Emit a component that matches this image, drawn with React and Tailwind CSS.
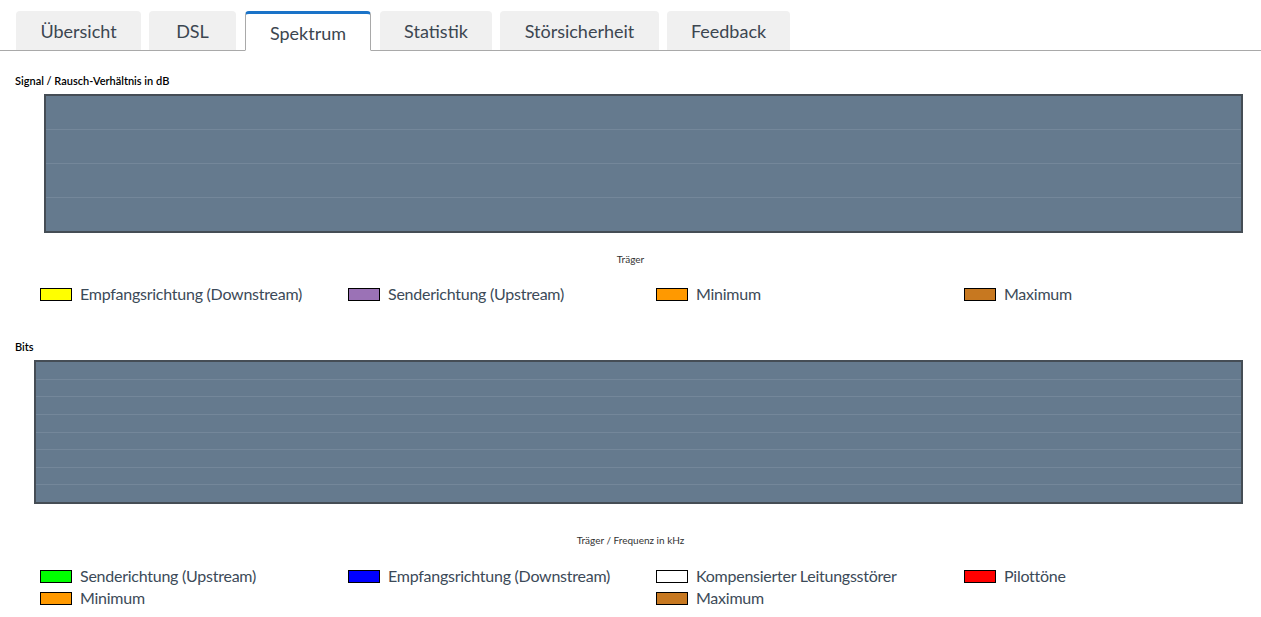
import React from 'react';

const tabs = [
  { label: 'Übersicht', w: 'w-[125px]' },
  { label: 'DSL', w: 'w-[87px]' },
  { label: 'Spektrum', w: 'w-[126px]', active: true },
  { label: 'Statistik', w: 'w-[112px]' },
  { label: 'Störsicherheit', w: 'w-[159px]' },
  { label: 'Feedback', w: 'w-[123px]' },
];

const font = { fontFamily: 'Lato, "Noto Sans", sans-serif' };

const Tabs = () => (
  <div className="flex items-end gap-2 pl-4 pt-[11px] border-b border-[#a9a9a9] h-[51px]">
    {tabs.map((t) =>
      t.active ? (
        <div
          key={t.label}
          className={`${t.w} h-[40px] -mb-px mx-px flex items-center justify-center pt-[2px] bg-white border border-[#a9a9a9] border-b-white border-t-[3px] border-t-[#1a73c8] rounded-t text-[18px] text-[#3c4650]`}
        >
          {t.label}
        </div>
      ) : (
        <div
          key={t.label}
          className={`${t.w} h-[39px] flex items-center justify-center pt-[2px] bg-[#f0f0f0] rounded-t text-[18px] text-[#3c4650]`}
        >
          {t.label}
        </div>
      )
    )}
  </div>
);

const Chart = ({ rows, height, left }) => (
  <div className={`${left} mr-[18px] ${height} border-2 border-[#454d55] bg-[#657a8e] flex flex-col`}>
    {Array.from({ length: rows }).map((_, i) => (
      <div key={i} className={`flex-1 ${i < rows - 1 ? 'border-b border-[#74879a]' : ''}`} />
    ))}
  </div>
);

const Swatch = ({ color }) => (
  <span className={`inline-block w-[32px] h-[13px] border border-black ${color}`} />
);

const LegendItem = ({ color, label, className = '' }) => (
  <div className={`flex items-center gap-[8px] h-[22px] ${className}`}>
    <Swatch color={color} />
    <span className="text-[16px] tracking-[-0.25px] text-[#3c4a58]">{label}</span>
  </div>
);

export default function App() {
  return (
    <div className="bg-white w-[1261px] h-[617px] overflow-hidden" style={font}>
      <Tabs />

      <div className="pl-[15px] mt-[24px] text-[11px] font-semibold text-black leading-[12px]">
        Signal / Rausch-Verhältnis in dB
      </div>
      <div className="mt-[7px]">
        <Chart rows={4} height="h-[139px]" left="ml-[44px]" />
      </div>
      <div className="mt-[20px] text-center text-[10px] text-[#333] leading-[12px]">Träger</div>
      <div className="mt-[18px] grid grid-cols-[308px_308px_308px_308px] pl-[40px]">
        <LegendItem color="bg-[#ffff00]" label="Empfangsrichtung (Downstream)" />
        <LegendItem color="bg-[#9b72b6]" label="Senderichtung (Upstream)" />
        <LegendItem color="bg-[#ff9900]" label="Minimum" />
        <LegendItem color="bg-[#c77820]" label="Maximum" />
      </div>

      <div className="pl-[15px] mt-[36px] text-[11px] font-semibold text-black leading-[12px]">Bits</div>
      <div className="mt-[7px]">
        <Chart rows={8} height="h-[144px]" left="ml-[34px]" />
      </div>
      <div className="mt-[30px] text-center text-[10px] text-[#333] leading-[12px]">
        Träger / Frequenz in kHz
      </div>
      <div className="mt-[19px] grid grid-cols-[308px_308px_308px_308px] pl-[40px]">
        <LegendItem color="bg-[#00ff00]" label="Senderichtung (Upstream)" />
        <LegendItem color="bg-[#0000ff]" label="Empfangsrichtung (Downstream)" />
        <LegendItem color="bg-white" label="Kompensierter Leitungsstörer" />
        <LegendItem color="bg-[#ff0000]" label="Pilottöne" />
        <LegendItem color="bg-[#ff9900]" label="Minimum" />
        <LegendItem color="bg-[#c77820]" label="Maximum" className="col-start-3" />
      </div>
    </div>
  );
}
